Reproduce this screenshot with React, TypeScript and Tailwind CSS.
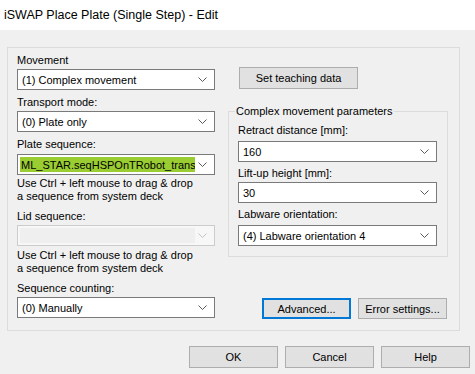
import React from "react";

const Chevron = ({ disabled }: { disabled?: boolean }) => (
  <svg width="9" height="5" viewBox="0 0 9 5" className="shrink-0">
    <polyline
      points="0.5,0.5 4.5,4.5 8.5,0.5"
      fill="none"
      stroke={disabled ? "#c4c4c4" : "#5a5a5a"}
      strokeWidth="1"
    />
  </svg>
);

const Combo = ({
  value,
  w,
  highlight,
  disabled,
}: {
  value: string;
  w: string;
  highlight?: boolean;
  disabled?: boolean;
}) => (
  <div
    className={`${w} h-[21px] border flex items-stretch ${
      disabled ? "border-[#cccccc] bg-[#f7f7f7]" : "border-[#7a7a7a] bg-white"
    }`}
  >
    <div className="flex-1 min-w-0 p-[2px]">
      <div
        className={`h-full flex items-center overflow-hidden whitespace-nowrap ${
          highlight ? "bg-[#9acd32] pl-[1px]" : disabled ? "bg-[#efefef]" : "pl-[2px]"
        }`}
      >
        {value}
      </div>
    </div>
    <div className="w-[17px] flex items-center justify-start pl-[1px]">
      <Chevron disabled={disabled} />
    </div>
  </div>
);

const Btn = ({
  label,
  w,
  h,
  focused,
}: {
  label: string;
  w: string;
  h: string;
  focused?: boolean;
}) => (
  <div
    className={`${w} ${h} flex items-center justify-center bg-[#e1e1e1] whitespace-nowrap ${
      focused ? "border-2 border-[#0078d7]" : "border border-[#adadad]"
    }`}
  >
    {label}
  </div>
);

export default function App() {
  return (
    <div
      className="w-[475px] h-[374px] bg-[#f0f0f0] text-[#000] overflow-hidden text-[11px]"
      style={{ fontFamily: '"Liberation Sans", Arial, sans-serif' }}
    >
      <div className="h-[30px] bg-white flex items-center pl-[4px] text-[12.5px]">
        iSWAP Place Plate (Single Step) - Edit
      </div>
      <div className="pl-[7px] pt-[17px]">
        <div className="w-[453px] h-[284px] border border-[#dcdcdc] flex leading-[16px]">
          {/* left column */}
          <div className="ml-[9px] w-[198px] flex flex-col pt-[4px] whitespace-nowrap">
            <div>Movement</div>
            <div className="mt-[1px]">
              <Combo w="w-[198px]" value="(1) Complex movement" />
            </div>
            <div className="mt-[4px]">Transport mode:</div>
            <div className="mt-[1px]">
              <Combo w="w-[198px]" value="(0) Plate only" />
            </div>
            <div className="mt-[4px]">Plate sequence:</div>
            <div className="mt-[2px]">
              <Combo w="w-[198px]" value="ML_STAR.seqHSPOnTRobot_transport" highlight />
            </div>
            <div className="mt-[2px] leading-[13px]">
              Use Ctrl + left mouse to drag &amp; drop
              <br />a sequence from system deck
            </div>
            <div className="mt-[5px]">Lid sequence:</div>
            <div className="mt-[1px]">
              <Combo w="w-[198px]" value="" disabled />
            </div>
            <div className="mt-[3px] leading-[13px]">
              Use Ctrl + left mouse to drag &amp; drop
              <br />a sequence from system deck
            </div>
            <div className="mt-[5px]">Sequence counting:</div>
            <div className="mt-[1px]">
              <Combo w="w-[198px]" value="(0) Manually" />
            </div>
          </div>
          {/* right column */}
          <div className="ml-[13px] w-[220px] flex flex-col whitespace-nowrap">
            <div className="ml-[11px] mt-[19px]">
              <Btn label="Set teaching data" w="w-[119px]" h="h-[22px]" />
            </div>
            <div className="relative mt-[22px] w-[220px] h-[146px] border border-[#dcdcdc]">
              <div className="absolute left-[6px] top-[-9px] bg-[#f0f0f0] px-[1px] leading-[16px]">
                Complex movement parameters
              </div>
              <div className="flex flex-col pl-[9px] pt-[10px]">
                <div>Retract distance [mm]:</div>
                <div className="mt-[3px]">
                  <Combo w="w-[199px]" value="160" />
                </div>
                <div className="mt-[3px]">Lift-up height [mm]:</div>
                <div className="mt-[1px]">
                  <Combo w="w-[199px]" value="30" />
                </div>
                <div className="mt-[3px]">Labware orientation:</div>
                <div className="mt-[3px]">
                  <Combo w="w-[199px]" value="(4) Labware orientation 4" />
                </div>
              </div>
            </div>
            <div className="flex gap-[7px] ml-[34px] mt-[41px]">
              <Btn label="Advanced..." w="w-[89px]" h="h-[21px]" focused />
              <Btn label="Error settings..." w="w-[89px]" h="h-[21px]" />
            </div>
          </div>
        </div>
        <div className="flex gap-[7px] ml-[182px] mt-[15px]">
          <Btn label="OK" w="w-[89px]" h="h-[22px]" />
          <Btn label="Cancel" w="w-[89px]" h="h-[22px]" />
          <Btn label="Help" w="w-[89px]" h="h-[22px]" />
        </div>
      </div>
    </div>
  );
}
